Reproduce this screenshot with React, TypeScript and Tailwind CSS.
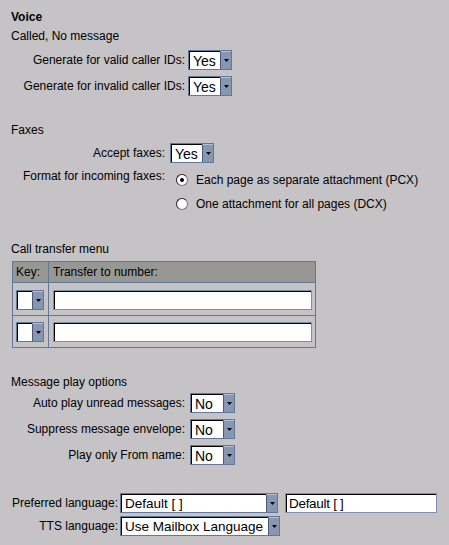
import React from 'react';

interface SelectProps {
  value: string;
  width: string;
  textSize?: string;
}

function Arrow() {
  return (
    <svg width="5" height="3" viewBox="0 0 5 3">
      <polygon points="0,0 5,0 2.5,3" fill="#000" />
    </svg>
  );
}

function Select({ value, width, textSize = 'text-[14px]' }: SelectProps) {
  return (
    <div className={`${width} h-[20px] flex border border-[#62779a] bg-white`}>
      <div className={`flex-1 min-w-0 border-t border-l border-black pl-[3px] leading-[18px] whitespace-nowrap overflow-hidden ${textSize}`}>
        {value}
      </div>
      <div className="w-[11px] shrink-0 bg-[#8797b2] border-l border-[#4a5a74] border-t border-t-[#b4c0d4] flex items-center justify-center">
        <Arrow />
      </div>
    </div>
  );
}

function TextField({ value, width }: { value: string; width: string }) {
  return (
    <div className={`${width} h-[20px] border border-[#7a8fae] bg-white`}>
      <div className="h-full border-t border-l border-black pl-[2px] leading-[18px] text-[13.5px] tracking-[-0.3px] whitespace-nowrap">
        {value}
      </div>
    </div>
  );
}

function Radio({ checked, label }: { checked?: boolean; label: string }) {
  return (
    <div className="flex items-center gap-[8px] h-[14px]">
      <span className="w-[12px] h-[12px] rounded-full bg-white border border-[#222] border-r-[#777] border-b-[#777] flex items-center justify-center">
        {checked && <span className="w-[4px] h-[4px] rounded-full bg-black" />}
      </span>
      <span>{label}</span>
    </div>
  );
}

export default function App() {
  return (
    <div className="w-[449px] h-[545px] overflow-hidden bg-[#c6c3c6] text-black text-[12px] leading-[14px] pt-[10px] pl-[11px] font-['Liberation_Sans',Arial,sans-serif]">
      <div className="font-bold">Voice</div>
      <div className="mt-[5px]">Called, No message</div>
      <div className="mt-[7px] grid grid-cols-[174px_auto] justify-start items-center gap-x-[3px] gap-y-[6px]">
        <div className="text-right">Generate for valid caller IDs:</div>
        <Select value="Yes" width="w-[44px]" />
        <div className="text-right">Generate for invalid caller IDs:</div>
        <Select value="Yes" width="w-[44px]" />
      </div>

      <div className="mt-[27px]">Faxes</div>
      <div className="mt-[6px] grid grid-cols-[154px_auto] justify-start items-center gap-x-[5px]">
        <div className="text-right">Accept faxes:</div>
        <Select value="Yes" width="w-[44px]" />
      </div>
      <div className="mt-[6px] flex">
        <div className="w-[154px] text-right">Format for incoming faxes:</div>
        <div className="pl-[11px] pt-[4px] flex flex-col gap-[10px]">
          <Radio checked label="Each page as separate attachment (PCX)" />
          <Radio label="One attachment for all pages (DCX)" />
        </div>
      </div>

      <div className="mt-[31px]">Call transfer menu</div>
      <div className="mt-[5px] ml-[1px] w-[304px] border border-[#5f7897]">
        <div className="flex h-[21px] bg-[#979893] border-b border-[#5f7897]">
          <div className="w-[36px] border-r border-[#5f7897] pl-[3px] leading-[20px]">Key:</div>
          <div className="flex-1 pl-[4px] leading-[20px]">Transfer to number:</div>
        </div>
        <div className="flex h-[33px] border-b border-[#5f7897]">
          <div className="w-[36px] border-r border-[#5f7897] pl-[3px] pt-[7px]">
            <Select value="" width="w-[28px]" />
          </div>
          <div className="flex-1 pl-[4px] pr-[3px] pt-[7px]">
            <TextField value="" width="w-full" />
          </div>
        </div>
        <div className="flex h-[31px]">
          <div className="w-[36px] border-r border-[#5f7897] pl-[3px] pt-[6px]">
            <Select value="" width="w-[28px]" />
          </div>
          <div className="flex-1 pl-[4px] pr-[3px] pt-[6px]">
            <TextField value="" width="w-full" />
          </div>
        </div>
      </div>

      <div className="mt-[27px]">Message play options</div>
      <div className="mt-[4px] grid grid-cols-[174px_auto] justify-start items-center gap-x-[5px] gap-y-[6px]">
        <div className="text-right">Auto play unread messages:</div>
        <Select value="No" width="w-[45px]" />
        <div className="text-right">Suppress message envelope:</div>
        <Select value="No" width="w-[45px]" />
        <div className="text-right">Play only From name:</div>
        <Select value="No" width="w-[45px]" />
      </div>

      <div className="mt-[28px] grid grid-cols-[107px_auto_auto] justify-start items-center gap-x-[2px] gap-y-[3px]">
        <div className="text-right">Preferred language:</div>
        <Select value="Default [ ]" width="w-[158px]" textSize="text-[13.5px]" />
        <div className="pl-[3px]">
          <TextField value="Default [ ]" width="w-[152px]" />
        </div>
        <div className="text-right">TTS language:</div>
        <Select value="Use Mailbox Language" width="w-[160px]" textSize="text-[13.5px]" />
        <div />
      </div>
    </div>
  );
}
